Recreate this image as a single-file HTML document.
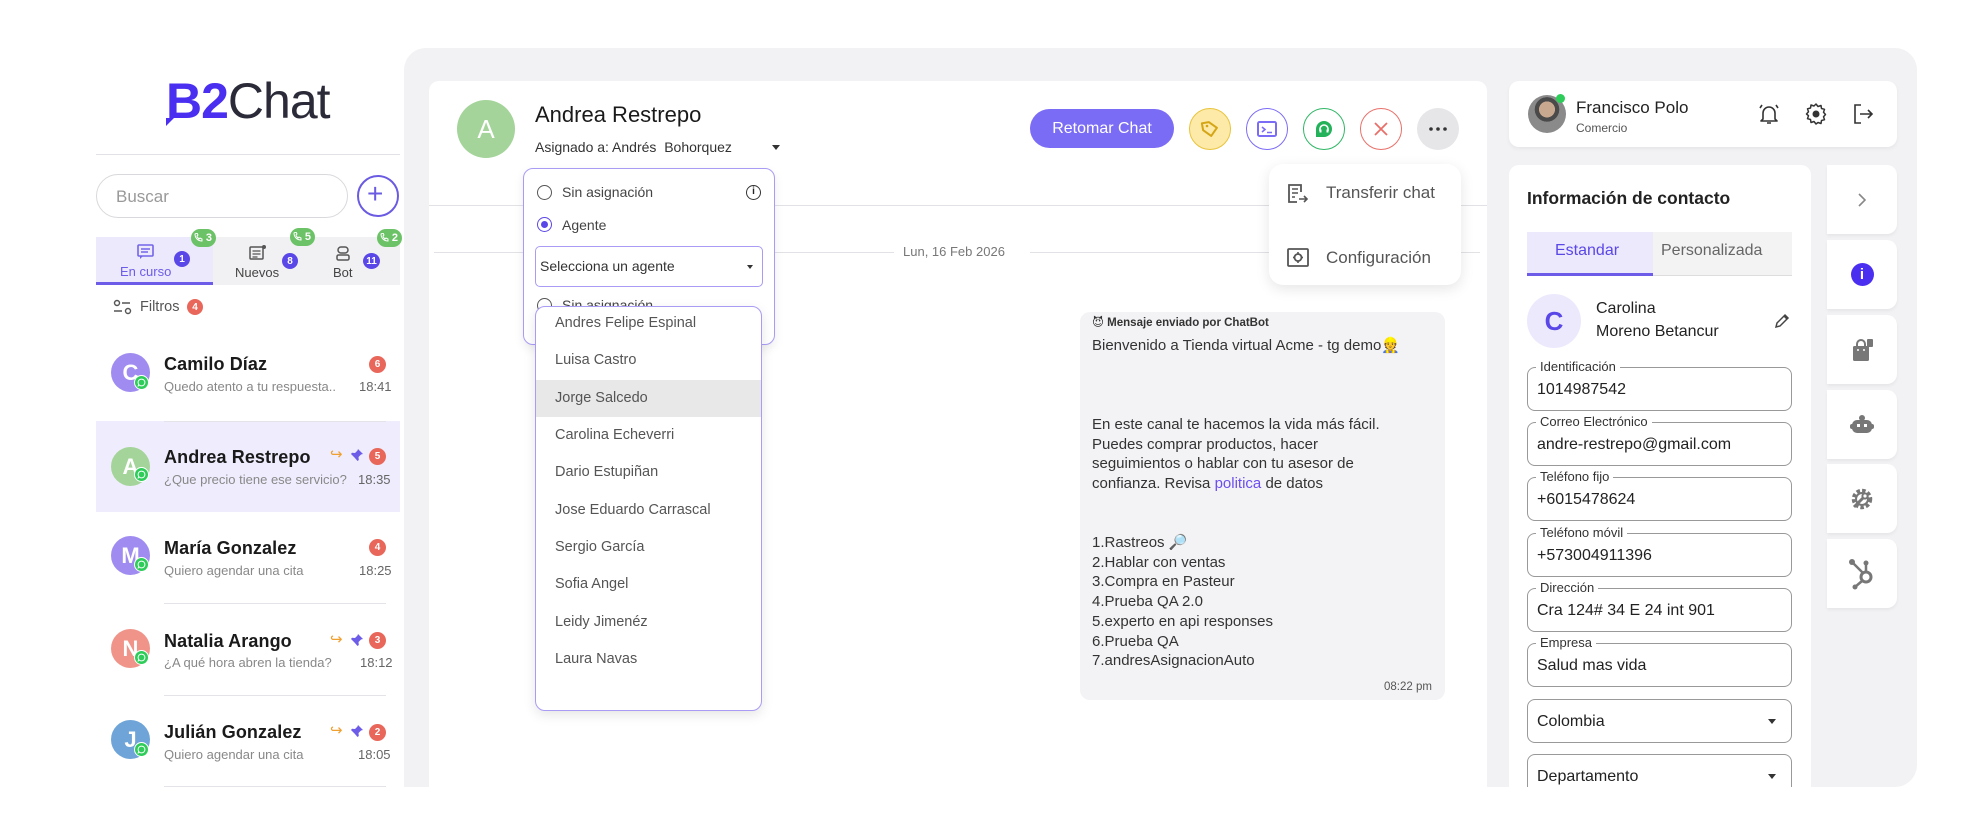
<!DOCTYPE html>
<html><head><meta charset="utf-8"><style>
*{box-sizing:border-box;margin:0;padding:0}
body{width:1980px;height:836px;background:#fff;position:relative;overflow:hidden;font-family:"Liberation Sans","DejaVu Sans",sans-serif;color:#222}
.a{position:absolute}
.t{position:absolute;white-space:nowrap;line-height:1}
.frame{left:404px;top:48px;width:1513px;height:739px;background:#f2f2f4;border-radius:22px 22px 22px 0}
.card{background:#fff;border-radius:10px}
.av{position:absolute;border-radius:50%;color:#fff;font-weight:bold;display:flex;align-items:center;justify-content:center}
.wa{position:absolute;width:15px;height:15px;border-radius:50%;background:#2ecc59;border:1.5px solid #fff;display:flex;align-items:center;justify-content:center}
.badge{position:absolute;border-radius:50%;color:#fff;font-size:10px;font-weight:bold;display:flex;align-items:center;justify-content:center}
.sep{position:absolute;left:164px;width:222px;height:1px;background:#e4e4e8}
.nm{font-size:18px;font-weight:bold;color:#1a1a1a;letter-spacing:.1px}
.pv{font-size:13px;color:#888}
.circ{position:absolute;width:42px;height:42px;border-radius:50%;display:flex;align-items:center;justify-content:center}
.fld{position:absolute;left:1527px;width:265px;height:44px;border:1.3px solid #999;border-radius:8px}
.fld .lb{position:absolute;left:8px;top:-9px;background:#fff;padding:0 4px;font-size:13px;color:#333;line-height:16px}
.fld .v{position:absolute;left:9px;top:13px;font-size:16px;color:#222;line-height:18px}
.caret{position:absolute;width:0;height:0;border-left:4px solid transparent;border-right:4px solid transparent;border-top:5px solid #333}
.tile{position:absolute;left:1827px;width:70px;height:69px;background:#fff;border-radius:0 10px 10px 0;display:flex;align-items:center;justify-content:center;box-shadow:0 2px 3px rgba(0,0,0,.05)}
.ag{position:absolute;left:555px;font-size:14.5px;color:#555;white-space:nowrap;line-height:1}
</style></head><body>

<div class="a frame"></div>

<!-- LEFT PANEL -->
<div class="t" style="left:166px;top:76px;font-size:50px;letter-spacing:-1px"><span style="color:#4a2ff0;font-weight:bold">B2</span><span style="color:#2b2a38">Chat</span></div>
<div class="a" style="left:166px;top:118px;width:0;height:0;border-left:8px solid #4a2ff0;border-bottom:8px solid transparent"></div>
<div class="a" style="left:96px;top:154px;width:304px;height:1px;background:#e2e2e6"></div>
<div class="a" style="left:96px;top:174px;width:252px;height:44px;border:1px solid #d9d9dd;border-radius:22px"></div>
<div class="t" style="left:116px;top:188px;font-size:17px;color:#999">Buscar</div>
<div class="a" style="left:357px;top:175px;width:42px;height:42px;border:2px solid #6a5be2;border-radius:50%"></div>
<div class="t" style="left:367px;top:180px;font-size:28px;color:#6a5be2;font-weight:300">+</div>

<div class="a" style="left:96px;top:237px;width:304px;height:48px;background:#f1f1f3"></div>
<div class="a" style="left:96px;top:237px;width:117px;height:48px;background:#ece9fd"></div>
<div class="a" style="left:96px;top:282px;width:117px;height:3px;background:#6c5ce7"></div>
<svg class="a" style="left:137px;top:244px" width="17" height="15" viewBox="0 0 17 15"><rect x="1" y="1" width="15" height="11" rx="1" fill="none" stroke="#7265e8" stroke-width="1.6"/><path d="M4 5h9M4 8h7" stroke="#7265e8" stroke-width="1.5"/><path d="M3 12v3l3-3" fill="#7265e8"/></svg>
<div class="t" style="left:120px;top:265px;font-size:13px;color:#6c5ce7">En curso</div>
<div class="badge" style="left:174px;top:251px;width:16px;height:16px;background:#5a47e8">1</div>
<svg class="a" style="left:249px;top:245px" width="17" height="15" viewBox="0 0 17 15"><rect x="1" y="2" width="13" height="12" rx="1" fill="none" stroke="#555" stroke-width="1.5"/><path d="M3.5 6h8M3.5 9h8M3.5 12h5" stroke="#555" stroke-width="1.3"/><circle cx="15" cy="2" r="2" fill="#555"/></svg>
<div class="t" style="left:235px;top:266px;font-size:13px;color:#444">Nuevos</div>
<div class="badge" style="left:282px;top:253px;width:16px;height:16px;background:#5a47e8">8</div>
<svg class="a" style="left:336px;top:246px" width="14" height="15" viewBox="0 0 14 15"><rect x="2" y="1" width="10" height="6" rx="3" fill="none" stroke="#555" stroke-width="1.5"/><rect x="1" y="9" width="12" height="5" rx="1.5" fill="none" stroke="#555" stroke-width="1.5"/></svg>
<div class="t" style="left:333px;top:266px;font-size:13px;color:#444">Bot</div>
<div class="badge" style="left:363px;top:253px;width:17px;height:16px;background:#5a47e8">11</div>
<div class="a" style="left:191px;top:229px;width:25px;height:18px;border-radius:9px;background:#6cc267;color:#fff;font-size:11px;font-weight:bold;line-height:18px;text-align:right;padding-right:4px">3</div>
<div class="a" style="left:290px;top:228px;width:25px;height:18px;border-radius:9px;background:#6cc267;color:#fff;font-size:11px;font-weight:bold;line-height:18px;text-align:right;padding-right:4px">5</div>
<div class="a" style="left:377px;top:229px;width:25px;height:18px;border-radius:9px;background:#6cc267;color:#fff;font-size:11px;font-weight:bold;line-height:18px;text-align:right;padding-right:4px">2</div>
<svg class="a" style="left:194px;top:233px" width="9" height="9" viewBox="0 0 9 9"><path d="M1 1c0 4 3 7 7 7l0-2-2-1-1 1C4 5 3 4 3 3l1-1-1-2z" fill="none" stroke="#fff" stroke-width="1"/></svg>
<svg class="a" style="left:293px;top:232px" width="9" height="9" viewBox="0 0 9 9"><path d="M1 1c0 4 3 7 7 7l0-2-2-1-1 1C4 5 3 4 3 3l1-1-1-2z" fill="none" stroke="#fff" stroke-width="1"/></svg>
<svg class="a" style="left:380px;top:233px" width="9" height="9" viewBox="0 0 9 9"><path d="M1 1c0 4 3 7 7 7l0-2-2-1-1 1C4 5 3 4 3 3l1-1-1-2z" fill="none" stroke="#fff" stroke-width="1"/></svg>

<svg class="a" style="left:113px;top:299px" width="19" height="16" viewBox="0 0 19 16"><circle cx="4" cy="4" r="2.5" fill="none" stroke="#555" stroke-width="1.4"/><path d="M9 4h8M1 12h8" stroke="#555" stroke-width="1.6"/><circle cx="15" cy="12" r="2.5" fill="none" stroke="#555" stroke-width="1.4"/></svg>
<div class="t" style="left:140px;top:300px;font-size:14.5px;color:#555">Filtros</div>
<div class="badge" style="left:187px;top:299px;width:16px;height:16px;background:#e8675a">4</div>

<!-- chat list -->
<div class="a" style="left:96px;top:421px;width:304px;height:91px;background:#efedfd"></div>
<div class="sep" style="top:421px"></div>
<div class="sep" style="top:603px"></div>
<div class="sep" style="top:695px"></div>
<div class="sep" style="top:786px"></div>

<div class="av" style="left:111px;top:353px;width:39px;height:39px;background:#a08cf0;font-size:22px">C</div><div class="wa" style="left:134px;top:375px"><svg width="9" height="9" viewBox="0 0 10 10"><circle cx="5" cy="5" r="3.8" fill="none" stroke="#fff" stroke-width="1.1"/><path d="M1 9.5l1-2.5" stroke="#fff" stroke-width="1.1"/></svg></div>
<div class="t nm" style="left:164px;top:355px">Camilo Díaz</div>
<div class="t pv" style="left:164px;top:380px">Quedo atento a tu respuesta..</div>
<div class="badge" style="left:369px;top:356px;width:17px;height:17px;background:#e8675a">6</div>
<div class="t pv" style="left:359px;top:380px;color:#666">18:41</div>

<div class="av" style="left:111px;top:447px;width:39px;height:39px;background:#a4d49a;font-size:22px">A</div><div class="wa" style="left:134px;top:467px"><svg width="9" height="9" viewBox="0 0 10 10"><circle cx="5" cy="5" r="3.8" fill="none" stroke="#fff" stroke-width="1.1"/><path d="M1 9.5l1-2.5" stroke="#fff" stroke-width="1.1"/></svg></div>
<div class="t nm" style="left:164px;top:448px">Andrea Restrepo</div>
<div class="t pv" style="left:164px;top:473px">¿Que precio tiene ese servicio?</div>
<div class="t" style="left:330px;top:447px;font-size:15px;color:#f0a030">↪</div>
<svg class="a" style="left:350px;top:448px" width="14" height="14" viewBox="0 0 14 14"><path d="M8 1l5 5-2 .5-2.5 2.5.3 3-1.3 1L4.5 9.5 1 13l3.5-3.5L1 6l1-1.3 3 .3L7.5 2.5z" fill="#6c5ce7"/></svg>
<div class="badge" style="left:369px;top:448px;width:17px;height:17px;background:#e8675a">5</div>
<div class="t pv" style="left:358px;top:473px;color:#666">18:35</div>

<div class="av" style="left:111px;top:536px;width:39px;height:39px;background:#a08cf0;font-size:22px">M</div><div class="wa" style="left:134px;top:557px"><svg width="9" height="9" viewBox="0 0 10 10"><circle cx="5" cy="5" r="3.8" fill="none" stroke="#fff" stroke-width="1.1"/><path d="M1 9.5l1-2.5" stroke="#fff" stroke-width="1.1"/></svg></div>
<div class="t nm" style="left:164px;top:539px">María Gonzalez</div>
<div class="t pv" style="left:164px;top:564px">Quiero agendar una cita</div>
<div class="badge" style="left:369px;top:539px;width:17px;height:17px;background:#e8675a">4</div>
<div class="t pv" style="left:359px;top:564px;color:#666">18:25</div>

<div class="av" style="left:111px;top:629px;width:39px;height:39px;background:#f0948a;font-size:22px">N</div><div class="wa" style="left:134px;top:650px"><svg width="9" height="9" viewBox="0 0 10 10"><circle cx="5" cy="5" r="3.8" fill="none" stroke="#fff" stroke-width="1.1"/><path d="M1 9.5l1-2.5" stroke="#fff" stroke-width="1.1"/></svg></div>
<div class="t nm" style="left:164px;top:632px">Natalia Arango</div>
<div class="t pv" style="left:164px;top:656px">¿A qué hora abren la tienda?</div>
<div class="t" style="left:330px;top:632px;font-size:15px;color:#f0a030">↪</div>
<svg class="a" style="left:350px;top:633px" width="14" height="14" viewBox="0 0 14 14"><path d="M8 1l5 5-2 .5-2.5 2.5.3 3-1.3 1L4.5 9.5 1 13l3.5-3.5L1 6l1-1.3 3 .3L7.5 2.5z" fill="#6c5ce7"/></svg>
<div class="badge" style="left:369px;top:632px;width:17px;height:17px;background:#e8675a">3</div>
<div class="t pv" style="left:360px;top:656px;color:#666">18:12</div>

<div class="av" style="left:111px;top:720px;width:39px;height:39px;background:#6fa4d8;font-size:22px">J</div><div class="wa" style="left:134px;top:742px"><svg width="9" height="9" viewBox="0 0 10 10"><circle cx="5" cy="5" r="3.8" fill="none" stroke="#fff" stroke-width="1.1"/><path d="M1 9.5l1-2.5" stroke="#fff" stroke-width="1.1"/></svg></div>
<div class="t nm" style="left:164px;top:723px">Julián Gonzalez</div>
<div class="t pv" style="left:164px;top:748px">Quiero agendar una cita</div>
<div class="t" style="left:330px;top:723px;font-size:15px;color:#f0a030">↪</div>
<svg class="a" style="left:350px;top:724px" width="14" height="14" viewBox="0 0 14 14"><path d="M8 1l5 5-2 .5-2.5 2.5.3 3-1.3 1L4.5 9.5 1 13l3.5-3.5L1 6l1-1.3 3 .3L7.5 2.5z" fill="#6c5ce7"/></svg>
<div class="badge" style="left:369px;top:724px;width:17px;height:17px;background:#e8675a">2</div>
<div class="t pv" style="left:358px;top:748px;color:#666">18:05</div>

<!-- MIDDLE PANEL -->
<div class="a card" style="left:429px;top:81px;width:1058px;height:706px;border-radius:10px 10px 0 0"></div>
<div class="av" style="left:457px;top:100px;width:58px;height:58px;background:#a4d49a;font-size:26px;font-weight:normal">A</div>
<div class="t" style="left:535px;top:104px;font-size:22px;color:#1a1a1a">Andrea Restrepo</div>
<div class="t" style="left:535px;top:140px;font-size:14px;color:#333">Asignado a: Andrés &nbsp;Bohorquez</div>
<div class="caret" style="left:772px;top:145px"></div>
<div class="a" style="left:1030px;top:109px;width:144px;height:39px;border-radius:20px;background:#7b6cf6;color:#fff;font-size:16px;line-height:39px;text-align:center">Retomar Chat</div>
<div class="circ" style="left:1189px;top:108px;background:#fde9a8;border:1.5px solid #e8c43c"><svg width="20" height="20" viewBox="0 0 20 20"><path d="M3 3h7l7 7-7 7-7-7z" fill="none" stroke="#d4a514" stroke-width="2" stroke-linejoin="round" transform="rotate(-10 10 10)"/><circle cx="7" cy="7" r="1.3" fill="#d4a514"/></svg></div>
<div class="circ" style="left:1246px;top:108px;border:1.5px solid #7b6cf6"><svg width="20" height="16" viewBox="0 0 20 16"><rect x="1" y="1" width="18" height="14" rx="1.5" fill="none" stroke="#7b6cf6" stroke-width="2"/><path d="M5 6l3 2.5-3 2.5M10 11.5h5" stroke="#7b6cf6" stroke-width="1.6" fill="none"/></svg></div>
<div class="circ" style="left:1303px;top:108px;border:1.5px solid #2fb765"><svg width="20" height="20" viewBox="0 0 20 20"><path d="M2 10a8 8 0 1 1 8 8H2z" fill="#23b25a"/><path d="M6 12v-2a4 4 0 0 1 8 0v2" stroke="#fff" stroke-width="1.6" fill="none"/><rect x="5.5" y="10.5" width="2" height="3" fill="#fff"/><rect x="12.5" y="10.5" width="2" height="3" fill="#fff"/></svg></div>
<div class="circ" style="left:1360px;top:108px;border:1.5px solid #e9706a"><svg width="16" height="16" viewBox="0 0 16 16"><path d="M2 2l12 12M14 2L2 14" stroke="#e9706a" stroke-width="1.8"/></svg></div>
<div class="circ" style="left:1417px;top:108px;background:#e6e6e9"><svg width="18" height="4" viewBox="0 0 18 4"><circle cx="2" cy="2" r="1.8" fill="#333"/><circle cx="9" cy="2" r="1.8" fill="#333"/><circle cx="16" cy="2" r="1.8" fill="#333"/></svg></div>
<div class="a" style="left:429px;top:205px;width:1058px;height:1px;background:#e2e2e6"></div>
<div class="a" style="left:434px;top:252px;width:460px;height:1px;background:#e2e2e6"></div>
<div class="a" style="left:1030px;top:252px;width:450px;height:1px;background:#e2e2e6"></div>
<div class="t" style="left:903px;top:245px;font-size:13px;color:#777">Lun, 16 Feb 2026</div>

<div class="a" style="left:1080px;top:312px;width:365px;height:388px;background:#f3f3f5;border-radius:10px"></div>
<div class="t" style="left:1092px;top:318px;font-size:11.5px;font-weight:bold;color:#333">😈 Mensaje enviado por ChatBot</div>
<div class="a" style="left:1092px;top:336px;font-size:15px;line-height:19.7px;color:#333;white-space:pre">Bienvenido a Tienda virtual Acme - tg demo👷



En este canal te hacemos la vida más fácil.
Puedes comprar productos, hacer
seguimientos o hablar con tu asesor de
confianza. Revisa <span style="color:#6c4ef0">politica</span> de datos


1.Rastreos 🔎
2.Hablar con ventas
3.Compra en Pasteur
4.Prueba QA 2.0
5.experto en api responses
6.Prueba QA
7.andresAsignacionAuto</div>
<div class="t" style="left:1384px;top:682px;font-size:11.5px;color:#555">08:22 pm</div>

<!-- assignment dropdown -->
<div class="a" style="left:523px;top:168px;width:252px;height:177px;background:#fff;border:1.5px solid #a99cf5;border-radius:10px;box-shadow:0 4px 10px rgba(0,0,0,.08)"></div>
<div class="a" style="left:537px;top:185px;width:15px;height:15px;border:1.5px solid #555;border-radius:50%"></div>
<div class="t" style="left:562px;top:185px;font-size:14px;color:#444">Sin asignación</div>
<div class="a" style="left:746px;top:185px;width:15px;height:15px;border:1.5px solid #333;border-radius:50%;font-size:10px;text-align:center;line-height:12px;font-weight:bold">i</div>
<div class="a" style="left:537px;top:217px;width:15px;height:15px;border:1.5px solid #5a47e8;border-radius:50%"></div>
<div class="a" style="left:541px;top:221px;width:7px;height:7px;background:#5a47e8;border-radius:50%"></div>
<div class="t" style="left:562px;top:218px;font-size:14px;color:#444">Agente</div>
<div class="a" style="left:535px;top:246px;width:228px;height:41px;border:1.5px solid #a99cf5;border-radius:5px"></div>
<div class="t" style="left:540px;top:259px;font-size:14px;color:#333">Selecciona un agente</div>
<div class="caret" style="left:747px;top:265px;border-left-width:3px;border-right-width:3px;border-top-width:4px"></div>
<div class="a" style="left:537px;top:298px;width:15px;height:15px;border:1.5px solid #555;border-radius:50%"></div>
<div class="t" style="left:562px;top:298px;font-size:14px;color:#444">Sin asignación</div>
<div class="a" style="left:535px;top:306px;width:227px;height:405px;background:#fff;border:1.5px solid #a99cf5;border-radius:10px;box-shadow:0 4px 12px rgba(0,0,0,.1);overflow:hidden"><div style="position:absolute;left:0;top:73px;width:100%;height:37px;background:#e8e8e8"></div></div>
<div class="ag" style="top:316px">Andres Felipe Espinal</div>
<div class="ag" style="top:353px">Luisa Castro</div>
<div class="ag" style="top:391px">Jorge Salcedo</div>
<div class="ag" style="top:428px">Carolina Echeverri</div>
<div class="ag" style="top:465px">Dario Estupiñan</div>
<div class="ag" style="top:503px">Jose Eduardo Carrascal</div>
<div class="ag" style="top:540px">Sergio García</div>
<div class="ag" style="top:577px">Sofia Angel</div>
<div class="ag" style="top:615px">Leidy Jimenéz</div>
<div class="ag" style="top:652px">Laura Navas</div>

<div class="a" style="left:1269px;top:164px;width:192px;height:121px;background:#fff;border-radius:14px;box-shadow:0 4px 14px rgba(0,0,0,.1)"></div>
<svg class="a" style="left:1287px;top:183px" width="22" height="22" viewBox="0 0 22 22"><path d="M14 9V2H2v17h8" fill="none" stroke="#555" stroke-width="1.8"/><path d="M5 6h6M5 10h6M5 14h3M12 16h8M17 13l3 3-3 3" fill="none" stroke="#555" stroke-width="1.6"/></svg>
<div class="t" style="left:1326px;top:184px;font-size:17px;color:#555">Transferir chat</div>
<svg class="a" style="left:1287px;top:248px" width="22" height="20" viewBox="0 0 22 20"><rect x="1" y="1" width="20" height="17" rx="1" fill="none" stroke="#555" stroke-width="1.8"/><circle cx="11" cy="9.5" r="3.5" fill="none" stroke="#555" stroke-width="1.8"/><path d="M11 4v2M11 13v2M6 9.5h2M14 9.5h2" stroke="#555" stroke-width="1.6"/></svg>
<div class="t" style="left:1326px;top:249px;font-size:17px;color:#555">Configuración</div>

<!-- RIGHT -->
<div class="a card" style="left:1509px;top:81px;width:388px;height:66px;box-shadow:0 2px 4px rgba(0,0,0,.05)"></div>
<div class="a" style="left:1528px;top:95px;width:38px;height:38px;border-radius:50%;background:radial-gradient(circle at 50% 38%,#c9a890 0 26%,#4a4a4a 27% 40%,#8a8a8a 41%)"></div>
<div class="a" style="left:1556px;top:94px;width:9px;height:9px;border-radius:50%;background:#2ecc59"></div>
<div class="t" style="left:1576px;top:99px;font-size:17px;color:#222">Francisco Polo</div>
<div class="t" style="left:1576px;top:122px;font-size:12px;color:#555">Comercio</div>
<svg class="a" style="left:1757px;top:102px" width="24" height="24" viewBox="0 0 24 24"><path d="M6 17V11a6 6 0 0 1 12 0v6l2 2H4z" fill="none" stroke="#333" stroke-width="1.6" stroke-linejoin="round"/><path d="M10 21h4M3 6l2-3M21 6l-2-3" stroke="#333" stroke-width="1.6"/></svg>
<svg class="a" style="left:1804px;top:102px" width="24" height="24" viewBox="0 0 24 24"><path d="M12 2l2 2.5 3-1 .5 3 3 .8-1 3 2 2.2-2 2.2 1 3-3 .8-.5 3-3-1L12 22l-2-2.5-3 1-.5-3-3-.8 1-3L2.5 12 4.5 9.8l-1-3 3-.8.5-3 3 1z" fill="none" stroke="#333" stroke-width="1.5" stroke-linejoin="round"/><circle cx="12" cy="12" r="3.5" fill="#333"/></svg>
<svg class="a" style="left:1851px;top:102px" width="24" height="24" viewBox="0 0 24 24"><path d="M10 3H4v18h6" fill="none" stroke="#333" stroke-width="1.6"/><path d="M9 12h12M17 8l4 4-4 4" fill="none" stroke="#333" stroke-width="1.6"/></svg>

<div class="a card" style="left:1509px;top:165px;width:302px;height:622px;border-radius:10px 10px 0 0"></div>
<div class="t" style="left:1527px;top:190px;font-size:17.5px;font-weight:bold;color:#222">Información de contacto</div>
<div class="a" style="left:1527px;top:232px;width:265px;height:44px;background:#f3f3f3"></div>
<div class="a" style="left:1527px;top:232px;width:126px;height:44px;background:#ece9fd"></div>
<div class="a" style="left:1527px;top:273px;width:126px;height:3px;background:#6c5ce7"></div>
<div class="a" style="left:1653px;top:275px;width:139px;height:1px;background:#ddd"></div>
<div class="t" style="left:1555px;top:243px;font-size:16px;color:#5a47e8">Estandar</div>
<div class="t" style="left:1661px;top:243px;font-size:16px;color:#666">Personalizada</div>
<div class="av" style="left:1527px;top:294px;width:54px;height:54px;background:#ece9fd;color:#5a47e8;font-size:26px">C</div>
<div class="t" style="left:1596px;top:301px;font-size:16px;color:#222">Carolina</div>
<div class="t" style="left:1596px;top:324px;font-size:16px;color:#222">Moreno Betancur</div>
<svg class="a" style="left:1774px;top:313px" width="16" height="16" viewBox="0 0 16 16"><path d="M2 14l1-4 8-8 3 3-8 8z M10 3l3 3" fill="none" stroke="#444" stroke-width="1.5"/></svg>

<div class="fld" style="top:367px"><span class="lb">Identificación</span><span class="v">1014987542</span></div>
<div class="fld" style="top:422px"><span class="lb">Correo Electrónico</span><span class="v">andre-restrepo@gmail.com</span></div>
<div class="fld" style="top:477px"><span class="lb">Teléfono fijo</span><span class="v">+6015478624</span></div>
<div class="fld" style="top:533px"><span class="lb">Teléfono móvil</span><span class="v">+573004911396</span></div>
<div class="fld" style="top:588px"><span class="lb">Dirección</span><span class="v">Cra 124# 34 E 24 int 901</span></div>
<div class="fld" style="top:643px"><span class="lb">Empresa</span><span class="v">Salud mas vida</span></div>
<div class="fld" style="top:699px"><span class="v" style="top:13px">Colombia</span><div class="caret" style="left:240px;top:19px"></div></div>
<div class="fld" style="top:754px;height:60px"><span class="v" style="top:13px">Departamento</span><div class="caret" style="left:240px;top:19px"></div></div>
<div class="a" style="left:1500px;top:787px;width:480px;height:49px;background:#fff"></div>
<div class="a" style="left:404px;top:787px;width:1100px;height:49px;background:#fff"></div>

<div class="tile" style="top:165px"><svg width="12" height="16" viewBox="0 0 12 16"><path d="M3 2l6 6-6 6" fill="none" stroke="#888" stroke-width="1.6"/></svg></div>
<div class="tile" style="top:240px"><div style="width:23px;height:23px;border-radius:50%;background:#4a2ff0;color:#fff;font-weight:bold;font-size:15px;text-align:center;line-height:23px">i</div></div>
<div class="tile" style="top:315px"><svg width="26" height="26" viewBox="0 0 26 26"><path d="M8 10V7a4 4 0 0 1 8 0v3" fill="none" stroke="#777" stroke-width="2"/><rect x="4" y="9" width="16" height="15" rx="1.5" fill="#777"/><circle cx="9" cy="13" r="1" fill="#fff"/><circle cx="15" cy="13" r="1" fill="#fff"/><rect x="18" y="2" width="6" height="8" rx="1" fill="#777"/></svg></div>
<div class="tile" style="top:390px"><svg width="26" height="22" viewBox="0 0 26 22"><rect x="3" y="6" width="20" height="13" rx="5" fill="#777"/><circle cx="13" cy="4" r="3" fill="#777"/><rect x="1" y="10" width="24" height="5" rx="2" fill="#777"/><rect x="8" y="10" width="3" height="3" fill="#fff"/><rect x="15" y="10" width="3" height="3" fill="#fff"/></svg></div>
<div class="tile" style="top:464px"><svg width="26" height="26" viewBox="0 0 26 26"><circle cx="13" cy="13" r="8.5" fill="none" stroke="#777" stroke-width="3.5" stroke-dasharray="3.5 2.2"/><circle cx="13" cy="13" r="6" fill="none" stroke="#777" stroke-width="2"/><path d="M5 21l9-9" stroke="#777" stroke-width="3"/><circle cx="16" cy="10" r="2.6" fill="#fff" stroke="#777" stroke-width="2"/></svg></div>
<div class="tile" style="top:539px"><svg width="28" height="32" viewBox="0 0 28 32"><circle cx="4" cy="4" r="3" fill="#777"/><path d="M4 4l11 11" stroke="#777" stroke-width="2.5"/><circle cx="18" cy="19" r="5" fill="none" stroke="#777" stroke-width="3"/><path d="M18 14V6M14 23l-7 6" stroke="#777" stroke-width="2.5"/><circle cx="18" cy="5" r="2.5" fill="#777"/><circle cx="7" cy="29" r="2.5" fill="#777"/></svg></div>

</body></html>
